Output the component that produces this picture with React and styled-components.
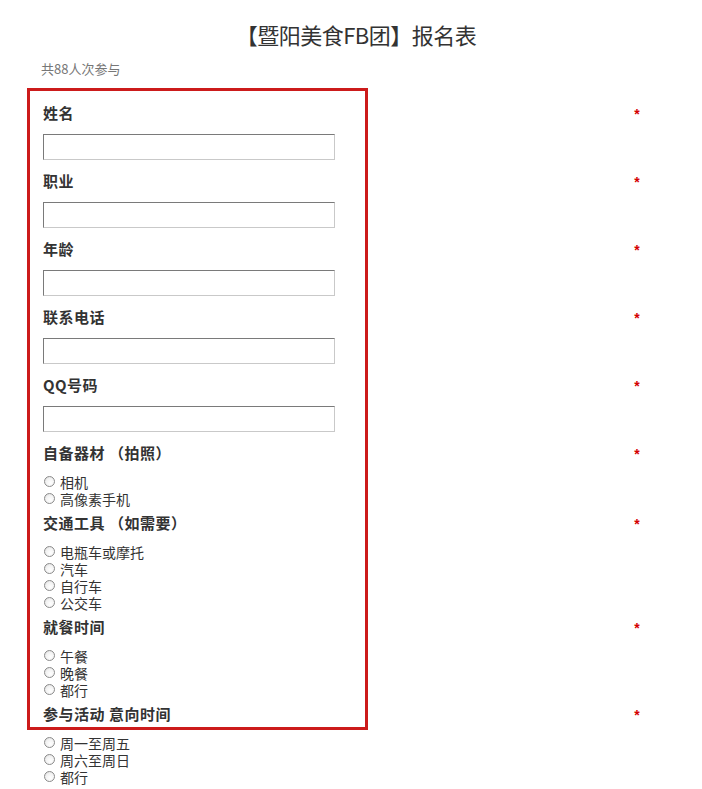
import React from "react";
import styled, { createGlobalStyle } from "styled-components";

const Global = createGlobalStyle`
  html, body { margin: 0; padding: 0; background: #fff; }
  body { font-family: "Noto Sans CJK SC", "Noto Sans", sans-serif; color: #333; }
`;

const Page = styled.div`
  position: relative;
  width: 702px;
  min-height: 789px;
  box-sizing: border-box;
  padding: 0 61px 0 43px;
`;

const Title = styled.h1`
  margin: 0;
  padding: 19px 0 0 28px;
  height: 30px;
  line-height: 30px;
  text-align: center;
  font-size: 22px;
  font-weight: 400;
  color: #333;
  letter-spacing: -0.5px;
`;

const Count = styled.div`
  margin: 11px 0 0 -2px;
  height: 18px;
  line-height: 18px;
  font-size: 13px;
  color: #777;
`;

const Form = styled.form`
  display: flex;
  flex-direction: column;
  padding-top: 24px;
`;

const Field = styled.div`
  display: flex;
  flex-direction: column;
  padding-bottom: ${(p) => (p.$radio ? 4 : 10)}px;
`;

const Head = styled.div`
  display: flex;
  justify-content: space-between;
  align-items: center;
  height: 22px;
`;

const Label = styled.label`
  font-family: "Noto Sans CJK SC", serif;
  font-size: 15px;
  line-height: 22px;
  font-weight: 700;
  color: #333;
  letter-spacing: 0.5px;
  white-space: pre;
`;

const Star = styled.span`
  color: #d40000;
  font-size: 14px;
  line-height: 22px;
  font-weight: 700;
  font-family: "Liberation Sans", sans-serif;
  width: 8px;
  text-align: center;
  position: relative;
  top: 1px;
`;

const TextInput = styled.input`
  margin-top: 10px;
  width: 292px;
  height: 26px;
  box-sizing: border-box;
  border: 1px solid;
  border-color: #7a7a7a #c9c9c9 #c9c9c9 #7a7a7a;
  background: #fff;
  padding: 0 4px;
  outline: none;
`;

const Options = styled.div`
  display: flex;
  flex-direction: column;
  margin-top: 10px;
`;

const Option = styled.label`
  display: flex;
  align-items: center;
  height: 17px;
  line-height: 17px;
  font-size: 14px;
  color: #333;
`;

const Radio = styled.input.attrs({ type: "radio" })`
  appearance: none;
  flex: none;
  margin: 0 5px 0 1px;
  width: 11px;
  height: 11px;
  border-radius: 50%;
  border: 1px solid #8a8a8a;
  background: radial-gradient(circle at 60% 65%, #fff 0%, #f2f2f2 55%, #d6d6d6 100%);
  box-sizing: border-box;
  position: relative;
  top: -1px;
`;

const Highlight = styled.div`
  position: absolute;
  left: 27px;
  top: 88px;
  width: 341px;
  height: 642px;
  box-sizing: border-box;
  border: 3px solid #cc1b1b;
  pointer-events: none;
`;

const fields = [
  { label: "姓名" },
  { label: "职业" },
  { label: "年龄" },
  { label: "联系电话" },
  { label: "QQ号码" },
  { label: "自备器材 （拍照）", options: ["相机", "高像素手机"] },
  { label: "交通工具 （如需要）", options: ["电瓶车或摩托", "汽车", "自行车", "公交车"] },
  { label: "就餐时间", options: ["午餐", "晚餐", "都行"] },
  { label: "参与活动 意向时间", options: ["周一至周五", "周六至周日", "都行"] },
];

export default function App() {
  return (
    <>
      <Global />
      <Page>
        <Title>【暨阳美食FB团】报名表</Title>
        <Count>共88人次参与</Count>
        <Form>
          {fields.map((f, i) => (
            <Field key={i} $radio={!!f.options}>
              <Head>
                <Label>{f.label}</Label>
                <Star>*</Star>
              </Head>
              {f.options ? (
                <Options>
                  {f.options.map((o) => (
                    <Option key={o}>
                      <Radio name={"q" + i} />
                      {o}
                    </Option>
                  ))}
                </Options>
              ) : (
                <TextInput type="text" />
              )}
            </Field>
          ))}
        </Form>
        <Highlight />
      </Page>
    </>
  );
}
